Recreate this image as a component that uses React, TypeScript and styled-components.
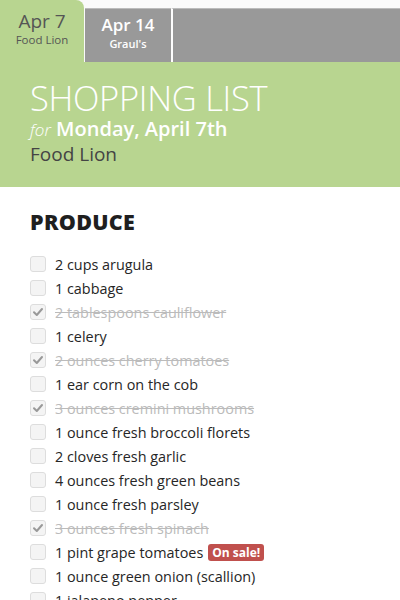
import React from "react";
import styled, { createGlobalStyle } from "styled-components";

const GREEN = "#b8d590";

const Global = createGlobalStyle`
  html, body { margin: 0; padding: 0; background: #fff; }
  body { font-family: "Open Sans", "DejaVu Sans", sans-serif; }
`;

const Page = styled.div`
  width: 400px;
  height: 600px;
  overflow: hidden;
  background: #fff;
`;

const TabBar = styled.div`
  display: flex;
  align-items: flex-end;
  height: 62px;
  background: #fafafa;
`;

const Tab = styled.div<{ $active?: boolean }>`
  box-sizing: border-box;
  display: flex;
  flex-direction: column;
  align-items: center;
  justify-content: center;
  width: ${(p) => (p.$active ? "84px" : "86px")};
  height: ${(p) => (p.$active ? "62px" : "54px")};
  margin-left: ${(p) => (p.$active ? "0" : "1px")};
  background: ${(p) => (p.$active ? GREEN : "#999")};
  border-top: ${(p) => (p.$active ? "none" : "1px solid #bbb")};
  border-top-right-radius: ${(p) => (p.$active ? "8px" : "0")};
  color: ${(p) => (p.$active ? "#555" : "#fff")};
  padding-bottom: ${(p) => (p.$active ? "5px" : "5px")};
`;

const TabDate = styled.div<{ $active?: boolean }>`
  font-size: ${(p) => (p.$active ? "19px" : "17px")};
  font-weight: ${(p) => (p.$active ? 400 : 600)};
  line-height: 22px;
`;

const TabStore = styled.div<{ $active?: boolean }>`
  font-size: ${(p) => (p.$active ? "11.5px" : "11px")};
  font-weight: ${(p) => (p.$active ? 400 : 600)};
  line-height: 16px;
`;

const Filler = styled.div`
  flex: 1;
  height: 54px;
  box-sizing: border-box;
  background: #999;
  border-top: 1px solid #bbb;
  border-left: 2px solid #fff;
`;

const Header = styled.header`
  background: ${GREEN};
  padding: 17px 30px 21px;
`;

const Title = styled.h1`
  margin: 0;
  font-size: 34.5px;
  font-weight: 300;
  line-height: 38px;
  color: #fff;
  letter-spacing: -0.3px;
`;

const DateLine = styled.div`
  font-size: 20px;
  font-weight: 600;
  color: #fff;
  line-height: 24px;
`;

const For = styled.span`
  font-size: 17px;
  font-weight: 300;
  font-style: italic;
`;

const Store = styled.div`
  font-size: 19px;
  color: #444;
  line-height: 24px;
`;

const Section = styled.section`
  padding: 20px 30px 0;
`;

const SectionTitle = styled.h2`
  margin: 0 0 15px;
  font-size: 21.5px;
  font-weight: 800;
  color: #1f1f1f;
  line-height: 30px;
  letter-spacing: 0.3px;
`;

const List = styled.ul`
  list-style: none;
  margin: 0;
  padding: 0;
`;

const Item = styled.li`
  display: flex;
  align-items: center;
  height: 24px;
`;

const Box = styled.span`
  box-sizing: border-box;
  width: 16px;
  height: 16px;
  border: 1px solid #ddd;
  border-radius: 3px;
  background: #f4f4f4;
  display: flex;
  align-items: center;
  justify-content: center;
  margin-right: 9px;
  flex-shrink: 0;
`;

const Label = styled.span<{ $done?: boolean }>`
  font-size: 14.4px;
  color: ${(p) => (p.$done ? "#bbb" : "#262626")};
  text-decoration: ${(p) => (p.$done ? "line-through" : "none")};
  white-space: nowrap;
`;

const Badge = styled.span`
  margin-left: 5px;
  background: #c0504d;
  color: #fff;
  font-size: 12px;
  font-weight: 700;
  line-height: 17px;
  padding: 0 4px;
  border-radius: 3px;
`;

const items: { t: string; done?: boolean; sale?: boolean }[] = [
  { t: "2 cups arugula" },
  { t: "1 cabbage" },
  { t: "2 tablespoons cauliflower", done: true },
  { t: "1 celery" },
  { t: "2 ounces cherry tomatoes", done: true },
  { t: "1 ear corn on the cob" },
  { t: "3 ounces cremini mushrooms", done: true },
  { t: "1 ounce fresh broccoli florets" },
  { t: "2 cloves fresh garlic" },
  { t: "4 ounces fresh green beans" },
  { t: "1 ounce fresh parsley" },
  { t: "3 ounces fresh spinach", done: true },
  { t: "1 pint grape tomatoes", sale: true },
  { t: "1 ounce green onion (scallion)" },
  { t: "1 jalapeno pepper" },
];

const Check = () => (
  <svg width="12" height="12" viewBox="0 0 12 12">
    <path d="M2 6.2 L4.8 9 L10 3" fill="none" stroke="#999" strokeWidth="2" strokeLinecap="round" strokeLinejoin="round" />
  </svg>
);

export default function App() {
  return (
    <Page>
      <Global />
      <TabBar>
        <Tab $active>
          <TabDate $active>Apr 7</TabDate>
          <TabStore $active>Food Lion</TabStore>
        </Tab>
        <Tab>
          <TabDate>Apr 14</TabDate>
          <TabStore>Graul's</TabStore>
        </Tab>
        <Filler />
      </TabBar>
      <Header>
        <Title>SHOPPING LIST</Title>
        <DateLine>
          <For>for</For> Monday, April 7th
        </DateLine>
        <Store>Food Lion</Store>
      </Header>
      <Section>
        <SectionTitle>PRODUCE</SectionTitle>
        <List>
          {items.map((it) => (
            <Item key={it.t}>
              <Box>{it.done && <Check />}</Box>
              <Label $done={it.done}>{it.t}</Label>
              {it.sale && <Badge>On sale!</Badge>}
            </Item>
          ))}
        </List>
      </Section>
    </Page>
  );
}
